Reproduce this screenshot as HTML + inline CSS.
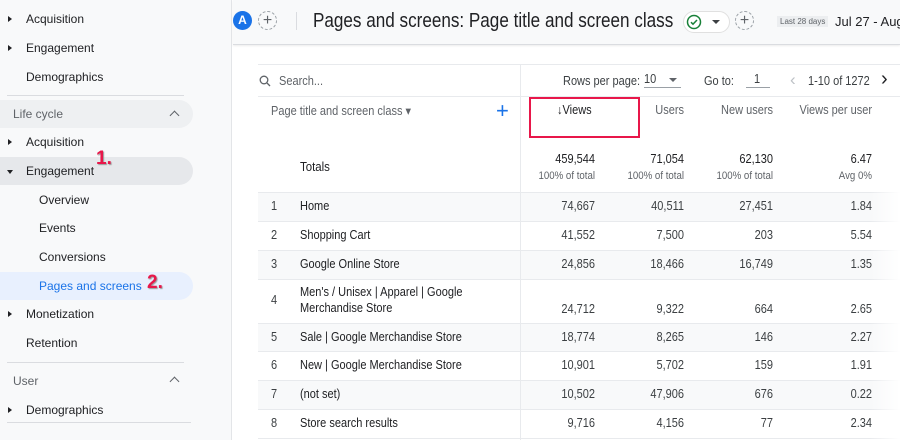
<!DOCTYPE html>
<html><head><meta charset="utf-8"><style>
*{margin:0;padding:0;box-sizing:border-box}
body{width:900px;height:440px;overflow:hidden;position:relative;background:#fff;font-family:"Liberation Sans",sans-serif;color:#202124}
.a{position:absolute;white-space:nowrap}
#side{position:absolute;left:0;top:0;width:232px;height:440px;background:#f8f9fa;border-right:1px solid #e3e5e8}
.si{position:absolute;font-size:12px;color:#202124;line-height:28px;height:28px;white-space:nowrap}
.tri{position:absolute;left:8px;width:0;height:0;border-top:3px solid transparent;border-bottom:3px solid transparent;border-left:4px solid #202124}
.pill{position:absolute;left:0;width:193px;height:28px;border-radius:0 14px 14px 0}
.hr{position:absolute;left:7px;width:177px;height:1px;background:#dadce0}
.hd{position:absolute;left:13px;font-size:12px;color:#5f6368}
.car{position:absolute;left:171px;width:7px;height:7px;border-left:1.5px solid #5f6368;border-top:1.5px solid #5f6368;transform:rotate(45deg)}
.t{font-size:12.5px;transform:scaleX(.88);transform-origin:left center}
.row{position:absolute;left:258px;width:642px;border-bottom:1px solid #e8eaed}
.g{background:#f8f9fa}
.n{position:absolute;text-align:right;width:90px;font-size:12.5px;color:#3c4043;transform:scaleX(.88);transform-origin:right center;white-space:nowrap}
</style></head><body>
<div id="side">
<div class="tri" style="top:16px"></div><div class="si" style="left:26px;top:5px">Acquisition</div>
<div class="tri" style="top:45px"></div><div class="si" style="left:26px;top:34px">Engagement</div>
<div class="si" style="left:26px;top:63px">Demographics</div>
<div class="hr" style="top:95px"></div>
<div class="pill" style="top:100px;background:#eef0f2"></div>
<div class="hd" style="top:107px">Life cycle</div><div class="car" style="top:112px"></div>
<div class="tri" style="top:139px"></div><div class="si" style="left:26px;top:128px">Acquisition</div>
<div class="pill" style="top:157px;background:#e6e8eb"></div>
<div style="position:absolute;left:7px;top:170px;border-left:3px solid transparent;border-right:3px solid transparent;border-top:4px solid #202124"></div>
<div class="si" style="left:26px;top:157px">Engagement</div>
<div class="a" style="left:96px;top:148px;font-size:19px;font-weight:bold;color:#e8174a;text-shadow:1px 1px 1px #999">1.</div>
<div class="si" style="left:39px;top:186px">Overview</div>
<div class="si" style="left:39px;top:214px">Events</div>
<div class="si" style="left:39px;top:243px">Conversions</div>
<div class="pill" style="top:272px;background:#e8f0fe"></div>
<div class="si" style="left:39px;top:272px;color:#1a73e8">Pages and screens</div>
<div class="a" style="left:147px;top:272px;font-size:19px;font-weight:bold;color:#e8174a;text-shadow:1px 1px 1px #999">2.</div>
<div class="tri" style="top:311px"></div><div class="si" style="left:26px;top:300px">Monetization</div>
<div class="si" style="left:26px;top:329px">Retention</div>
<div class="hr" style="top:362px"></div>
<div class="hd" style="top:374px">User</div><div class="car" style="top:378px"></div>
<div class="tri" style="top:407px"></div><div class="si" style="left:26px;top:396px">Demographics</div>
<div class="hr" style="top:422px;width:184px"></div>
</div>
<div style="position:absolute;left:233px;top:0;width:667px;height:45px;background:#f8f9fa;border-bottom:1px solid #dadce0;box-shadow:0 1px 2px rgba(0,0,0,.08)"></div>
<div class="a" style="left:233px;top:11px;width:19px;height:19px;border-radius:50%;background:#1a73e8;color:#fff;font-size:12px;font-weight:bold;text-align:center;line-height:19px">A</div>
<div class="a" style="left:258px;top:11px;width:19px;height:19px;border-radius:50%;border:1px dashed #9aa0a6;color:#5f6368;font-size:16px;text-align:center;line-height:17px">+</div>
<div class="a" style="left:296px;top:12px;width:1px;height:18px;background:#dadce0"></div>
<div class="a" style="left:313px;top:10px;font-size:20px;color:#202124;transform:scaleX(.855);transform-origin:left center">Pages and screens: Page title and screen class</div>
<div class="a" style="left:683px;top:11px;width:47px;height:22px;border:1px solid #e0e0e0;border-radius:11px;background:#fff"></div>
<svg class="a" style="left:686px;top:14px" width="16" height="16" viewBox="0 0 16 16"><circle cx="8" cy="8" r="6.5" fill="none" stroke="#188038" stroke-width="1.5"/><path d="M5 8.2l2 2 4-4.2" fill="none" stroke="#188038" stroke-width="1.5"/></svg>
<div class="a" style="left:712px;top:20px;border-left:4px solid transparent;border-right:4px solid transparent;border-top:4px solid #3c4043"></div>
<div class="a" style="left:735px;top:11px;width:19px;height:19px;border-radius:50%;border:1px dashed #9aa0a6;color:#5f6368;font-size:16px;text-align:center;line-height:17px">+</div>
<div class="a" style="left:777px;top:16px;padding:1px 3px;background:#eceef0;font-size:8px;color:#5f6368">Last 28 days</div>
<div class="a" style="left:835px;top:14px;font-size:13px;color:#202124">Jul 27 - Aug</div>
<div class="a" style="left:258px;top:64px;width:642px;height:1px;background:#e8eaed"></div>
<div class="a" style="left:520px;top:64px;width:1px;height:376px;background:#e8eaed"></div>
<svg class="a" style="left:259px;top:75px" width="12" height="12" viewBox="0 0 12 12"><circle cx="5" cy="5" r="3.8" fill="none" stroke="#5f6368" stroke-width="1.3"/><path d="M8 8l3 3" stroke="#5f6368" stroke-width="1.3"/></svg>
<div class="a t" style="left:279px;top:74px;color:#5f6368">Search...</div>
<div class="a t" style="left:563px;top:74px;color:#3c4043">Rows per page:</div>
<div class="a" style="left:644px;top:72px;width:37px;border-bottom:1px solid #9aa0a6;height:16px"></div>
<div class="a t" style="left:644px;top:72px;color:#3c4043">10</div>
<div class="a" style="left:669px;top:78px;border-left:4px solid transparent;border-right:4px solid transparent;border-top:4px solid #5f6368"></div>
<div class="a t" style="left:704px;top:74px;color:#3c4043">Go to:</div>
<div class="a" style="left:746px;top:72px;width:24px;border-bottom:1px solid #9aa0a6;height:16px"></div>
<div class="a t" style="left:754px;top:72px;color:#3c4043">1</div>
<div class="a" style="left:790px;top:70px;font-size:17px;color:#bdc1c6">&#x2039;</div>
<div class="a t" style="left:808px;top:74px;color:#3c4043">1-10 of 1272</div>
<div class="a" style="left:881px;top:68px;font-size:20px;color:#202124">&#x203A;</div>
<div class="a" style="left:258px;top:96px;width:642px;height:1px;background:#e8eaed"></div>
<div class="a t" style="left:271px;top:103px;color:#5f6368">Page title and screen class ▾</div>
<div class="a" style="left:496px;top:98px;font-size:22px;color:#1a73e8;font-weight:300">+</div>
<div class="a" style="left:529px;top:97px;width:111px;height:41px;border:2px solid #e8174a"></div>
<div class="a t" style="left:557px;top:103px;color:#202124">↓Views</div>
<div class="n" style="left:594px;top:103px;color:#5f6368">Users</div>
<div class="n" style="left:683px;top:103px;color:#5f6368">New users</div>
<div class="n" style="left:782px;top:103px;color:#5f6368">Views per user</div>
<div class="a t" style="left:300px;top:159px;font-size:13px">Totals</div>
<div class="n" style="left:505px;top:152px;color:#202124">459,544</div><div class="n" style="left:505px;top:170px;font-size:11px;color:#5f6368">100% of total</div>
<div class="n" style="left:594px;top:152px;color:#202124">71,054</div><div class="n" style="left:594px;top:170px;font-size:11px;color:#5f6368">100% of total</div>
<div class="n" style="left:683px;top:152px;color:#202124">62,130</div><div class="n" style="left:683px;top:170px;font-size:11px;color:#5f6368">100% of total</div>
<div class="n" style="left:782px;top:152px;color:#202124">6.47</div><div class="n" style="left:782px;top:170px;font-size:11px;color:#5f6368">Avg 0%</div>
<div class="row" style="top:192px;height:1px;border:0;background:#e8eaed"></div>
<div class="row g" style="top:193px;height:29px"></div>
<div class="row" style="top:222px;height:29px"></div>
<div class="row g" style="top:251px;height:29px"></div>
<div class="row" style="top:280px;height:44px"></div>
<div class="row g" style="top:324px;height:28px"></div>
<div class="row" style="top:352px;height:29px"></div>
<div class="row g" style="top:381px;height:29px"></div>
<div class="row" style="top:410px;height:29px"></div>
<div class="a" style="left:520px;top:192px;width:1px;height:248px;background:#e8eaed"></div>
<div class="a" style="left:870px;top:192px;width:30px;height:248px;background:linear-gradient(90deg,rgba(255,255,255,0),#fff)"></div>

<div class="a t" style="left:271px;top:199px;color:#3c4043">1</div><div class="a t" style="left:300px;top:199px">Home</div>
<div class="n" style="left:505px;top:199px">74,667</div><div class="n" style="left:594px;top:199px">40,511</div><div class="n" style="left:683px;top:199px">27,451</div><div class="n" style="left:782px;top:199px">1.84</div>

<div class="a t" style="left:271px;top:228px;color:#3c4043">2</div><div class="a t" style="left:300px;top:228px">Shopping Cart</div>
<div class="n" style="left:505px;top:228px">41,552</div><div class="n" style="left:594px;top:228px">7,500</div><div class="n" style="left:683px;top:228px">203</div><div class="n" style="left:782px;top:228px">5.54</div>

<div class="a t" style="left:271px;top:257px;color:#3c4043">3</div><div class="a t" style="left:300px;top:257px">Google Online Store</div>
<div class="n" style="left:505px;top:257px">24,856</div><div class="n" style="left:594px;top:257px">18,466</div><div class="n" style="left:683px;top:257px">16,749</div><div class="n" style="left:782px;top:257px">1.35</div>

<div class="a t" style="left:271px;top:293px;color:#3c4043">4</div><div class="a t" style="left:300px;top:285px">Men's / Unisex | Apparel | Google</div><div class="a t" style="left:300px;top:301px">Merchandise Store</div>
<div class="n" style="left:505px;top:302px">24,712</div><div class="n" style="left:594px;top:302px">9,322</div><div class="n" style="left:683px;top:302px">664</div><div class="n" style="left:782px;top:302px">2.65</div>

<div class="a t" style="left:271px;top:330px;color:#3c4043">5</div><div class="a t" style="left:300px;top:330px">Sale | Google Merchandise Store</div>
<div class="n" style="left:505px;top:330px">18,774</div><div class="n" style="left:594px;top:330px">8,265</div><div class="n" style="left:683px;top:330px">146</div><div class="n" style="left:782px;top:330px">2.27</div>

<div class="a t" style="left:271px;top:358px;color:#3c4043">6</div><div class="a t" style="left:300px;top:358px">New | Google Merchandise Store</div>
<div class="n" style="left:505px;top:358px">10,901</div><div class="n" style="left:594px;top:358px">5,702</div><div class="n" style="left:683px;top:358px">159</div><div class="n" style="left:782px;top:358px">1.91</div>

<div class="a t" style="left:271px;top:387px;color:#3c4043">7</div><div class="a t" style="left:300px;top:387px">(not set)</div>
<div class="n" style="left:505px;top:387px">10,502</div><div class="n" style="left:594px;top:387px">47,906</div><div class="n" style="left:683px;top:387px">676</div><div class="n" style="left:782px;top:387px">0.22</div>

<div class="a t" style="left:271px;top:416px;color:#3c4043">8</div><div class="a t" style="left:300px;top:416px">Store search results</div>
<div class="n" style="left:505px;top:416px">9,716</div><div class="n" style="left:594px;top:416px">4,156</div><div class="n" style="left:683px;top:416px">77</div><div class="n" style="left:782px;top:416px">2.34</div>
</body></html>
